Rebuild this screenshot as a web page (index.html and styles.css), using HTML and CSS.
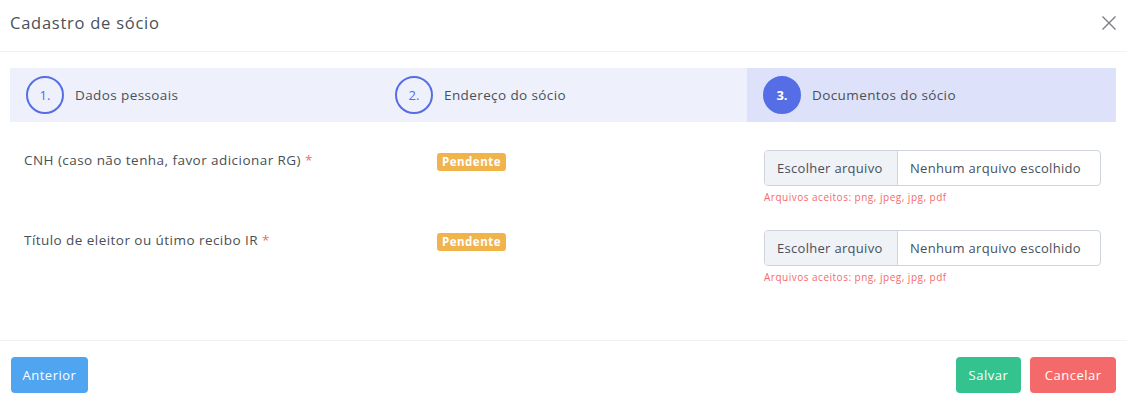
FILE: index.html
```html
<!DOCTYPE html>
<html lang="pt-BR">
<head>
<meta charset="utf-8">
<title>Cadastro de sócio</title>
<link rel="stylesheet" href="styles.css">
</head>
<body>
<div class="modal">
  <div class="modal-header">
    <h5 class="modal-title">Cadastro de sócio</h5>
    <button class="close" aria-label="Fechar">
      <svg width="16" height="16" viewBox="0 0 16 16"><path d="M1.5 1.5 L14.5 14.5 M14.5 1.5 L1.5 14.5" stroke="#7a7d82" stroke-width="1.4" fill="none"/></svg>
    </button>
  </div>
  <div class="modal-body">
    <div class="steps">
      <div class="step"><span class="num">1.</span><span class="step-label">Dados pessoais</span></div>
      <div class="step"><span class="num">2.</span><span class="step-label">Endereço do sócio</span></div>
      <div class="step active"><span class="num">3.</span><span class="step-label">Documentos do sócio</span></div>
    </div>
    <div class="doc-row">
      <div class="doc-label">CNH (caso não tenha, favor adicionar RG) <span class="req">*</span></div>
      <div class="doc-status"><span class="badge">Pendente</span></div>
      <div class="doc-file">
        <div class="file-input"><span class="file-btn">Escolher arquivo</span><span class="file-name">Nenhum arquivo escolhido</span></div>
        <div class="help">Arquivos aceitos: png, jpeg, jpg, pdf</div>
      </div>
    </div>
    <div class="doc-row">
      <div class="doc-label">Título de eleitor ou útimo recibo IR <span class="req">*</span></div>
      <div class="doc-status"><span class="badge">Pendente</span></div>
      <div class="doc-file">
        <div class="file-input"><span class="file-btn">Escolher arquivo</span><span class="file-name">Nenhum arquivo escolhido</span></div>
        <div class="help">Arquivos aceitos: png, jpeg, jpg, pdf</div>
      </div>
    </div>
  </div>
  <div class="modal-footer">
    <button class="btn btn-info">Anterior</button>
    <div class="right">
      <button class="btn btn-success">Salvar</button>
      <button class="btn btn-danger">Cancelar</button>
    </div>
  </div>
</div>
</body>
</html>
```
FILE: styles.css
```css
* { box-sizing: border-box; }
html, body { margin: 0; padding: 0; background: #fff; }
body {
  font-family: "Open Sans", "Noto Sans", sans-serif;
  color: #495057;
  font-size: 13px;
}
.modal { width: 1127px; height: 410px; display: flex; flex-direction: column; }
.modal-header {
  height: 52px;
  border-bottom: 1px solid #eff2f7;
  display: flex;
  align-items: center;
  justify-content: space-between;
  padding: 0 10px 0 10px;
}
.modal-title { margin: 0; font-size: 16.5px; letter-spacing: 0.75px; font-weight: 400; color: #495057; padding-bottom: 7px; }
.close { background: none; border: 0; padding: 0; width: 16px; height: 16px; margin-right: 0; margin-bottom: 5px; cursor: pointer; display: flex; }
.modal-body { padding: 16px 11px 0 10px; height: 288px; }
.steps { display: grid; grid-template-columns: 369px 368px 369px; height: 54px; }
.step {
  background: #eef0fc;
  display: flex;
  align-items: center;
  padding-left: 16px;
  gap: 11px;
}
.step.active { background: #dde2fa; }
.num {
  width: 38px; height: 38px;
  border-radius: 50%;
  border: 2px solid #556ee6;
  color: #556ee6;
  display: flex; align-items: center; justify-content: center;
  font-size: 13px;
  font-weight: 500;
}
.step.active .num { background: #556ee6; color: #fff; font-weight: 700; }
.step-label { color: #495057; font-size: 13.5px; letter-spacing: 0.4px; }
.doc-row {
  display: grid;
  grid-template-columns: 413px 327px 337px;
  padding-left: 14px;
  margin-top: 28px;
  height: 52px;
}
.doc-row + .doc-row { margin-top: 28px; }
.doc-label { padding-top: 1px; line-height: 18px; font-size: 13.5px; letter-spacing: 0.45px; }
.req { color: #f46a6a; }
.doc-status { padding-top: 2px; }
.badge {
  display: inline-block;
  background: #f1b44c;
  color: #fff;
  font-weight: 700;
  font-size: 11.5px;
  letter-spacing: 0.5px;
  line-height: 18px;
  padding: 0 5px;
  border-radius: 3px;
}
.file-input {
  display: flex;
  height: 36px;
  border: 1px solid #ced4da;
  border-radius: 4px;
  overflow: hidden;
  letter-spacing: 0.3px;
}
.file-btn {
  width: 133px;
  background: #eff2f7;
  border-right: 1px solid #ced4da;
  display: flex; align-items: center;
  padding-left: 12px;
  color: #495057;
}
.file-name { display: flex; align-items: center; padding-left: 12px; color: #495057; }
.help { color: #f46a6a; font-size: 10px; letter-spacing: 0.5px; margin-top: 4px; line-height: 14px; }
.modal-footer {
  border-top: 1px solid #eff2f7;
  height: 70px;
  display: flex;
  justify-content: space-between;
  align-items: flex-start;
  padding: 16px 11px 0 11px;
}
.right { display: flex; gap: 9px; }
.btn {
  border: 0;
  border-radius: 4px;
  height: 36px;
  padding: 0 12.5px;
  font-family: inherit;
  font-size: 13px;
  letter-spacing: 0.5px;
  font-weight: 500;
  color: #fff;
}
.btn-info { background: #50a5f1; padding: 0 11.5px; }
.btn-success { background: #34c38f; padding: 0 13px; }
.btn-danger { background: #f46a6a; padding: 0 14.5px; }
```
